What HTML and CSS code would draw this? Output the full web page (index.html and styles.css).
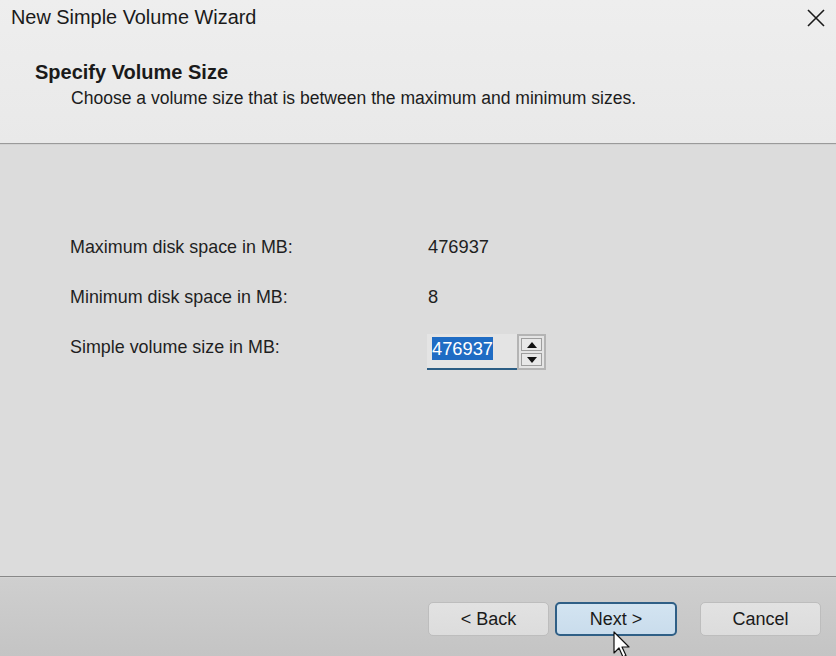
FILE: index.html
```html
<!DOCTYPE html>
<html>
<head>
<meta charset="utf-8">
<link rel="stylesheet" href="styles.css">
</head>
<body>
<div class="window">
  <div class="header">
    <div class="titlebar">
      <span class="title">New Simple Volume Wizard</span>
      <svg class="close" width="20" height="20" viewBox="0 0 20 20"><path d="M2 2 L18 18 M18 2 L2 18" stroke="#1a1a1a" stroke-width="1.6" fill="none"/></svg>
    </div>
    <div class="heading">
      <div class="h1">Specify Volume Size</div>
      <div class="desc">Choose a volume size that is between the maximum and minimum sizes.</div>
    </div>
  </div>
  <div class="sep sep-top"></div>
  <div class="body">
    <div class="form">
      <div class="label">Maximum disk space in MB:</div>
      <div class="value">476937</div>
      <div class="label">Minimum disk space in MB:</div>
      <div class="value">8</div>
      <div class="label">Simple volume size in MB:</div>
      <div class="spinner">
        <div class="spin-input"><span class="sel">476937</span></div>
        <div class="spin-btns">
          <div class="spin-btn"><svg width="10" height="6" viewBox="0 0 10 6"><path d="M5 0 L10 6 L0 6 Z" fill="#111"/></svg></div>
          <div class="spin-btn"><svg width="10" height="6" viewBox="0 0 10 6"><path d="M0 0 L10 0 L5 6 Z" fill="#111"/></svg></div>
        </div>
      </div>
    </div>
  </div>
  <div class="sep sep-bottom"></div>
  <div class="footer">
    <div class="btn">&lt; Back</div>
    <div class="btn btn-default">Next &gt;</div>
    <div class="btn btn-cancel">Cancel</div>
  </div>
  <svg class="cursor" width="20" height="30" viewBox="0 0 20 30"><path d="M1 1 L1 22 L6 17 L10 26 L13 24.5 L9 16 L16 16 Z" fill="#fff" stroke="#111" stroke-width="1.2" stroke-linejoin="round"/></svg>
</div>
</body>
</html>
```
FILE: styles.css
```css
html, body {
  margin: 0;
  padding: 0;
}
body {
  width: 836px;
  height: 656px;
  overflow: hidden;
  font-family: "Liberation Sans", Arial, sans-serif;
  color: #1c1c1c;
}
.window {
  position: relative;
  width: 836px;
  height: 656px;
  display: flex;
  flex-direction: column;
  background: #dcdcdc;
}
.header {
  height: 143px;
  background: linear-gradient(#eeeeee, #e9e9e9);
  display: flex;
  flex-direction: column;
}
.titlebar {
  height: 35px;
  display: flex;
  align-items: center;
  justify-content: space-between;
  padding: 0 10px 2px 11px;
}
.title {
  font-size: 19.9px;
  color: #1a1a1a;
}
.close {
  display: block;
}
.heading {
  padding: 24px 0 0 35px;
}
.h1 {
  font-weight: bold;
  font-size: 20px;
  line-height: 22px;
  color: #1a1a1a;
}
.desc {
  margin: 4px 0 0 36px;
  font-size: 17.55px;
  line-height: 22px;
}
.sep {
  height: 1px;
  background: #9a9a9a;
}
.sep-top {
  border-bottom: 1px solid #d2d2d2;
}
.sep-bottom {
  background: #888888;
  border-bottom: 1px solid #d4d4d4;
}
.body {
  flex: 1;
  padding: 77px 0 0 70px;
}
.form {
  display: grid;
  grid-template-columns: 358px auto;
  grid-auto-rows: 50px;
  align-items: center;
  font-size: 17.9px;
}
.label, .value {
  color: #1f1f1f;
}
.value {
  font-size: 18.3px;
}
.spinner {
  display: flex;
  align-items: stretch;
  height: 36px;
  width: 119px;
  margin-top: 10px;
  margin-left: -1px;
}
.spin-input {
  width: 91px;
  box-sizing: border-box;
  background: #e4e4e4;
  border-bottom: 2px solid #2b5d84;
  display: flex;
  align-items: flex-start;
  padding: 3px 0 0 5px;
}
.sel {
  background: #1f6cc4;
  color: #ffffff;
  line-height: 23px;
  font-size: 18.3px;
}
.spin-btns {
  width: 29px;
  box-sizing: border-box;
  border: 2px solid #b4b4b4;
  background: #e4e4e4;
  display: flex;
  flex-direction: column;
  gap: 2px;
  padding: 2px;
}
.spin-btn {
  flex: 1;
  border: 1px solid #9e9e9e;
  background: #e8e8e8;
  display: flex;
  align-items: center;
  justify-content: center;
}
.spin-btn svg {
  display: block;
}
.footer {
  height: 78px;
  box-sizing: border-box;
  background: linear-gradient(#cfcfcf, #c4c4c4);
  display: flex;
  justify-content: flex-end;
  align-items: flex-start;
  padding: 24px 15px 0 0;
  gap: 6px;
}
.btn {
  width: 121px;
  height: 34px;
  box-sizing: border-box;
  border: 1px solid #bdbdbd;
  border-radius: 5px;
  background: linear-gradient(#e2e2e2, #dcdcdc);
  display: flex;
  align-items: center;
  justify-content: center;
  font-size: 18px;
  color: #1a1a1a;
}
.btn-default {
  width: 122px;
  border: 2px solid #2f5f86;
  background: linear-gradient(#d3e4f1, #c9dcec);
}
.btn-cancel {
  margin-left: 17px;
}
.cursor {
  position: absolute;
  left: 613px;
  top: 631px;
}
```
